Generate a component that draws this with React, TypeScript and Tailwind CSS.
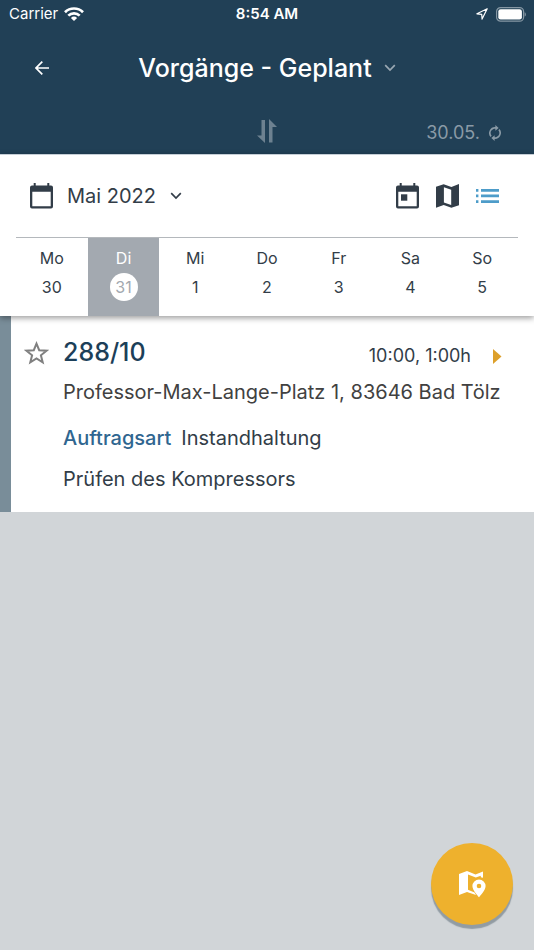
import { useState } from 'react';

const days = [
  { label: 'Mo', day: 30 },
  { label: 'Di', day: 31 },
  { label: 'Mi', day: 1 },
  { label: 'Do', day: 2 },
  { label: 'Fr', day: 3 },
  { label: 'Sa', day: 4 },
  { label: 'So', day: 5 },
];

const Chevron = () => (
  <svg width="12" height="8" viewBox="0 0 12 8" fill="none" stroke="currentColor" strokeWidth="1.7" aria-hidden="true">
    <path d="M1.2 1.2 6 6l4.8-4.8" />
  </svg>
);

const CalendarIcon = ({ today = false }: { today?: boolean }) => (
  <svg width="23" height="26" viewBox="0 0 23 26" fill="currentColor" aria-hidden="true">
    <path
      fillRule="evenodd"
      d="M3.7 0h2v2.5h11.6V0h2v2.5H21a2 2 0 0 1 2 2v19a2 2 0 0 1-2 2H2a2 2 0 0 1-2-2v-19a2 2 0 0 1 2-2h1.7zM2.3 8.8v14.5h18.4V8.8z"
    />
    {today && <path d="M5 11.3h6.3v6.4H5z" />}
  </svg>
);

const StatusBar = () => (
  <div className="grid h-7 grid-cols-3 items-center px-2 text-[15px] leading-5">
    <div className="flex items-center gap-1.5 pl-px">
      <span>Carrier</span>
      <svg width="20" height="14" viewBox="0 0 20 14" fill="none" stroke="currentColor" strokeWidth="2.7" aria-hidden="true">
        <path d="M1 5.2a12.8 12.8 0 0 1 18 0" />
        <path d="M4.3 8.6a8.2 8.2 0 0 1 11.4 0" />
        <path d="M10 14 6.9 10.9a4.4 4.4 0 0 1 6.2 0z" fill="currentColor" stroke="none" />
      </svg>
    </div>
    <span className="text-center font-semibold">8:54 AM</span>
    <div className="flex items-center justify-end gap-2">
      <svg width="12" height="12" viewBox="0 0 12 12" fill="none" stroke="currentColor" strokeWidth="1.2" strokeLinejoin="round" aria-hidden="true">
        <path d="M11.2.8.9 5.8l4.8.5.4 4.8z" />
      </svg>
      <svg width="30" height="15" viewBox="0 0 30 15" aria-hidden="true">
        <rect x=".6" y=".6" width="27" height="13.6" rx="4" fill="none" stroke="#8597a4" strokeWidth="1.2" />
        <rect x="2.3" y="2.3" width="23.6" height="10.2" rx="2.3" fill="#fff" />
        <path d="M28.6 5.2c1.7.7 1.7 3.7 0 4.4z" fill="#8597a4" />
      </svg>
    </div>
  </div>
);

const App = () => {
  const [selected, setSelected] = useState(31);

  return (
    <div className="flex min-h-screen flex-col bg-[#d1d5d8] font-['Inter','Liberation_Sans',sans-serif] text-[#323d48]">
      <header className="bg-[#214056] text-white">
        <StatusBar />
        <div className="grid h-[79px] grid-cols-[48px_1fr_48px] items-center px-[18px]">
          <button aria-label="Zurück" className="flex h-12 items-center justify-center">
            <svg width="14" height="14" viewBox="0 0 14 14" fill="none" stroke="currentColor" strokeWidth="1.7" aria-hidden="true">
              <path d="M14 7H1M7.3.7 1 7l6.3 6.3" />
            </svg>
          </button>
          <button className="flex items-center justify-center gap-3">
            <h1 className="text-[25px] leading-8 font-medium">Vorgänge - Geplant</h1>
            <span className="text-[#9aa8b3]"><Chevron /></span>
          </button>
        </div>
        <div className="grid h-[47px] grid-cols-3 items-center px-8 text-[#8a9aa6]">
          <button aria-label="Sortieren" className="col-start-2 justify-self-center text-[#6d8190]">
            <svg width="20" height="24" viewBox="0 0 20 24" fill="currentColor" aria-hidden="true">
              <path d="M4.5 1H8v23L0 16.5h4.500zM12 23.500h3.500V8H20l-8-8z" />
            </svg>
          </button>
          <button className="flex items-center gap-2 justify-self-end pt-1 text-lg leading-6">
            30.05.
            <svg width="14" height="16" viewBox="3 1 18 22" fill="currentColor" aria-hidden="true">
              <path d="M12.5 3.8V1L17 5l-4.500 4V6.200C9 6.200 6 8.700 6 12c0 1.500.5 2.800 1.400 3.900l-1.600 1.600A8.300 8.300 0 0 1 12.500 3.800z" />
              <path d="M11.5 20.200V23L7 19l4.500-4v2.800c3.500 0 6.500-2.500 6.500-5.800 0-1.500-.5-2.800-1.400-3.900l1.600-1.600a8.300 8.300 0 0 1-6.700 13.700z" />
            </svg>
          </button>
        </div>
      </header>

      <section className="relative border-t border-[#c5ced6] bg-white px-4 shadow-[0_2px_6px_rgba(0,0,0,0.4)]">
        <div className="flex h-[82px] items-center justify-between px-[14px]">
          <button className="flex items-center gap-3.5 text-xl">
            <CalendarIcon />
            <span>Mai 2022</span>
            <Chevron />
          </button>
          <div className="flex items-center gap-[17px] pr-[5px]">
            <button aria-label="Heute"><CalendarIcon today /></button>
            <button aria-label="Karte">
              <svg width="23" height="24" viewBox="0 0 23 24" fill="currentColor" aria-hidden="true">
                <path fillRule="evenodd" d="M0 2.8 7.7.3l7.7 2.700L23 0v21.200l-7.600 2.600-7.700-2.700L0 23.800zM7.900 3.200v15.300l7.300 2.600V5.800z" />
              </svg>
            </button>
            <button aria-label="Liste" className="text-[#4d9cc9]">
              <svg width="23" height="14" viewBox="0 0 23 14" fill="currentColor" aria-hidden="true">
                <path d="M0 0h2.400v2.700H0zM5 0h18v2.700H5zM0 5.600h2.400v2.700H0zM5 5.600h18v2.700H5zM0 11.200h2.400v2.700H0zM5 11.200h18v2.700H5z" />
              </svg>
            </button>
          </div>
        </div>
        <div className="grid grid-cols-7 border-t border-[#b4b8bc]">
          {days.map(({ label, day }) => (
            <button
              key={day}
              onClick={() => setSelected(day)}
              className={`flex flex-col items-center gap-[5px] pt-2.5 pb-[15px] text-base ${day === selected ? 'bg-[#a3a9b0] text-white' : ''}`}
            >
              <span className="leading-5">{label}</span>
              <span className={`flex size-7 items-center justify-center rounded-full ${day === selected ? 'bg-white text-[#a3a9b0]' : ''}`}>
                {day}
              </span>
            </button>
          ))}
        </div>
      </section>

      <main>
        <article className="flex border-l-[11px] border-[#798d99] bg-white pt-5 pr-8 pb-[19px] pl-[13px] text-xl leading-7">
          <button aria-label="Merken" className="mt-[5px] mr-3.5 self-start text-[#808080]">
            <svg width="25" height="24" viewBox="0 0 25 24" fill="none" stroke="currentColor" strokeWidth="2" aria-hidden="true">
              <path d="m12.500 2.600 2.700 6.600 7.300.5-5.600 4.600 1.800 7-6.200-3.900-6.200 3.900 1.800-7-5.600-4.600 7.300-.5z" />
            </svg>
          </button>
          <div className="min-w-0 flex-1">
            <div className="flex items-start justify-between">
              <h2 className="text-[25px] leading-8 font-medium text-[#1c3f59]">288/10</h2>
              <a href="#288-10" className="flex items-center gap-[22px] pt-2 text-lg leading-6">
                10:00, 1:00h
                <svg width="9" height="15" viewBox="0 0 9 15" fill="#dda02b" aria-hidden="true">
                  <path d="M0 0 8.5 7.5 0 15z" />
                </svg>
              </a>
            </div>
            <p className="mt-2.5 whitespace-nowrap text-[#414141]">Professor-Max-Lange-Platz 1, 83646 Bad Tölz</p>
            <p className="mt-[18px] flex gap-2.5">
              <span className="font-medium text-[#2f6690]">Auftragsart</span>
              <span>Instandhaltung</span>
            </p>
            <p className="mt-[13px]">Prüfen des Kompressors</p>
          </div>
        </article>
      </main>

      <button
        aria-label="Auf Karte anzeigen"
        className="fixed right-[21px] bottom-[25px] flex size-[82px] items-center justify-center rounded-full bg-[#eeb12d] text-white shadow-[0_4px_1px_#929ca3]"
      >
        <svg width="27" height="27" viewBox="0 0 27 27" fill="currentColor" aria-hidden="true">
          <path fillRule="evenodd" d="M0 3 8 0l8.500 3.500L24 .5v6.300a8 8 0 0 0-2.200-.6V4.700l-5 1.900L9 3.500v15.300l6.500 2.600 1.500 2.600-9-3-8 3z" />
          <path fillRule="evenodd" d="M20 8.500a6.600 6.600 0 0 0-6.600 6.600c0 4.500 6.600 11.200 6.600 11.200s6.600-6.700 6.600-11.200A6.600 6.600 0 0 0 20 8.500zm0 4.200a2.300 2.300 0 1 1 0 4.600 2.300 2.300 0 0 1 0-4.600z" />
        </svg>
      </button>
    </div>
  );
};

export default App;
